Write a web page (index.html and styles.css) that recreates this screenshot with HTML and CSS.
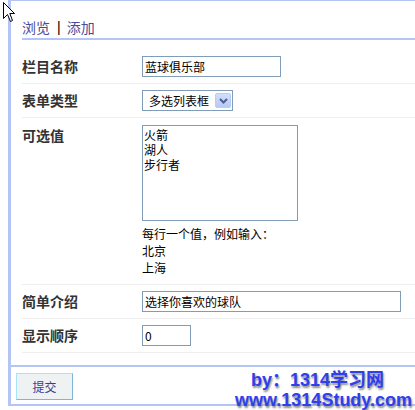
FILE: index.html
```html
<!DOCTYPE html>
<html>
<head>
<meta charset="utf-8">
<link rel="stylesheet" href="styles.css">
</head>
<body>
<div class="panel">
  <div class="tabs"><span class="tab">浏览</span><span class="bar">|</span><span class="tab">添加</span></div>
  <div class="form">
    <div class="row">
      <div class="label">栏目名称</div>
      <div class="field"><input class="text w-name" type="text" value="蓝球俱乐部"></div>
    </div>
    <div class="row">
      <div class="label">表单类型</div>
      <div class="field">
        <div class="select"><span class="select-text">多选列表框</span><span class="select-btn"><svg width="9" height="6" viewBox="0 0 9 6"><path d="M1 1 L4.5 4.5 L8 1" fill="none" stroke="#4d5f8c" stroke-width="2"/></svg></span></div>
      </div>
    </div>
    <div class="row row-tall">
      <div class="label">可选值</div>
      <div class="field">
        <textarea class="area">火箭
湖人
步行者</textarea>
        <div class="help">
          <div>每行一个值，例如输入：</div>
          <div>北京</div>
          <div>上海</div>
        </div>
      </div>
    </div>
    <div class="row">
      <div class="label">简单介绍</div>
      <div class="field"><input class="text w-desc" type="text" value="选择你喜欢的球队"></div>
    </div>
    <div class="row">
      <div class="label">显示顺序</div>
      <div class="field"><input class="text w-order" type="text" value="0"></div>
    </div>
  </div>
  <div class="footer"><button class="btn" type="button">提交</button></div>
</div>
<div class="watermark">
  <div class="wm-line1">by：1314学习网</div>
  <div class="wm-line2">www.1314Study.com</div>
</div>
<svg class="cursor" width="13" height="20" viewBox="0 0 13 20"><path d="M0.5 0.5 L0.5 16.5 L4.5 12.5 L7.5 19.5 L9.5 18.5 L6.8 11.5 L11.5 11.5 Z" fill="#fff" stroke="#000" stroke-width="1"/></svg>
</body>
</html>
```

FILE: styles.css
```css
html, body {
  margin: 0;
  padding: 0;
  background: #fff;
}
body {
  width: 415px;
  height: 410px;
  overflow: hidden;
  position: relative;
  font-family: "Noto Sans CJK SC", "Liberation Sans", sans-serif;
  font-size: 12px;
  color: #000;
}
.panel {
  margin-left: 8px;
  width: 404px;
  border-left: 3px solid #b4c4f4;
  border-top: 1px solid #b4c4f4;
  border-bottom: 2px solid #b4c4f4;
}
.tabs {
  margin-left: 11px;
  height: 20px;
  padding-top: 17px;
  border-bottom: 2px solid #b4c4f4;
  font-size: 14px;
  line-height: 18px;
  color: #4a4a98;
  display: flex;
  align-items: flex-start;
}
.tab {
  color: #4a4a98;
}
.bar {
  color: #000;
  margin: 0 6px 0 7px;
  font-family: "Liberation Sans", sans-serif;
}
.form {
  margin-left: 11px;
  padding-top: 10px;
  margin-bottom: 12px;
}
.row {
  display: grid;
  grid-template-columns: 120px 1fr;
  padding: 6px 0;
  border-bottom: 1px solid #efefef;
}
.row-tall {
  padding: 7px 0 8px;
}
.label {
  font-size: 14px;
  font-weight: bold;
  line-height: 21px;
  color: #333;
}
.field {
  display: flex;
  flex-direction: column;
  align-items: flex-start;
}
.text {
  box-sizing: border-box;
  height: 21px;
  margin: 0;
  border: 1px solid #7f9db9;
  padding: 0 2px;
  font-family: "Noto Sans CJK SC", "Liberation Sans", sans-serif;
  font-size: 12px;
  color: #000;
  background: #fff;
  outline: none;
}
.w-name { width: 139px; }
.w-desc { width: 259px; }
.w-order { width: 49px; }
.select {
  box-sizing: border-box;
  width: 91px;
  height: 21px;
  border: 1px solid #7f9db9;
  display: flex;
  align-items: center;
  justify-content: space-between;
  padding: 0 1px 0 6px;
  background: #fff;
}
.select-text {
  font-size: 12px;
  line-height: 15px;
}
.select-btn {
  box-sizing: border-box;
  width: 16px;
  height: 15px;
  border-radius: 2px;
  border: 1px solid #b9ccf6;
  background: linear-gradient(#d2defd, #b6c9f7);
  display: flex;
  align-items: center;
  justify-content: center;
}
.area {
  box-sizing: border-box;
  width: 156px;
  height: 96px;
  margin: 0;
  border: 1px solid #7f9db9;
  padding: 1px 1px;
  font-family: "Noto Sans CJK SC", "Liberation Sans", sans-serif;
  font-size: 12px;
  line-height: 15px;
  resize: none;
  overflow: hidden;
  outline: none;
  color: #000;
}
.help {
  margin-top: 4px;
  font-size: 12px;
  line-height: 17px;
}
.footer {
  border-top: 2px solid #b4c4f4;
  padding: 6px 0 4px 5px;
}
.btn {
  box-sizing: border-box;
  width: 57px;
  height: 27px;
  margin: 0;
  padding: 0;
  background: #eef2f3;
  border: 1px solid;
  border-color: #a8e4f8 #7fb6d6 #7fb6d6 #a8e4f8;
  color: #3c3c8c;
  font-family: "Noto Sans CJK SC", "Liberation Sans", sans-serif;
  font-size: 12px;
  display: block;
}
.watermark {
  position: absolute;
  left: 235px;
  top: 370px;
  font-family: "Liberation Sans", "Noto Sans CJK SC", sans-serif;
  font-weight: bold;
  font-size: 18px;
  line-height: 20px;
  color: #2f3ff0;
  text-shadow: 1px 2px 2px #8a8a8a;
  white-space: nowrap;
}
.wm-line1 {
  padding-left: 16px;
}
.cursor {
  position: absolute;
  left: 3px;
  top: 2px;
}
```
